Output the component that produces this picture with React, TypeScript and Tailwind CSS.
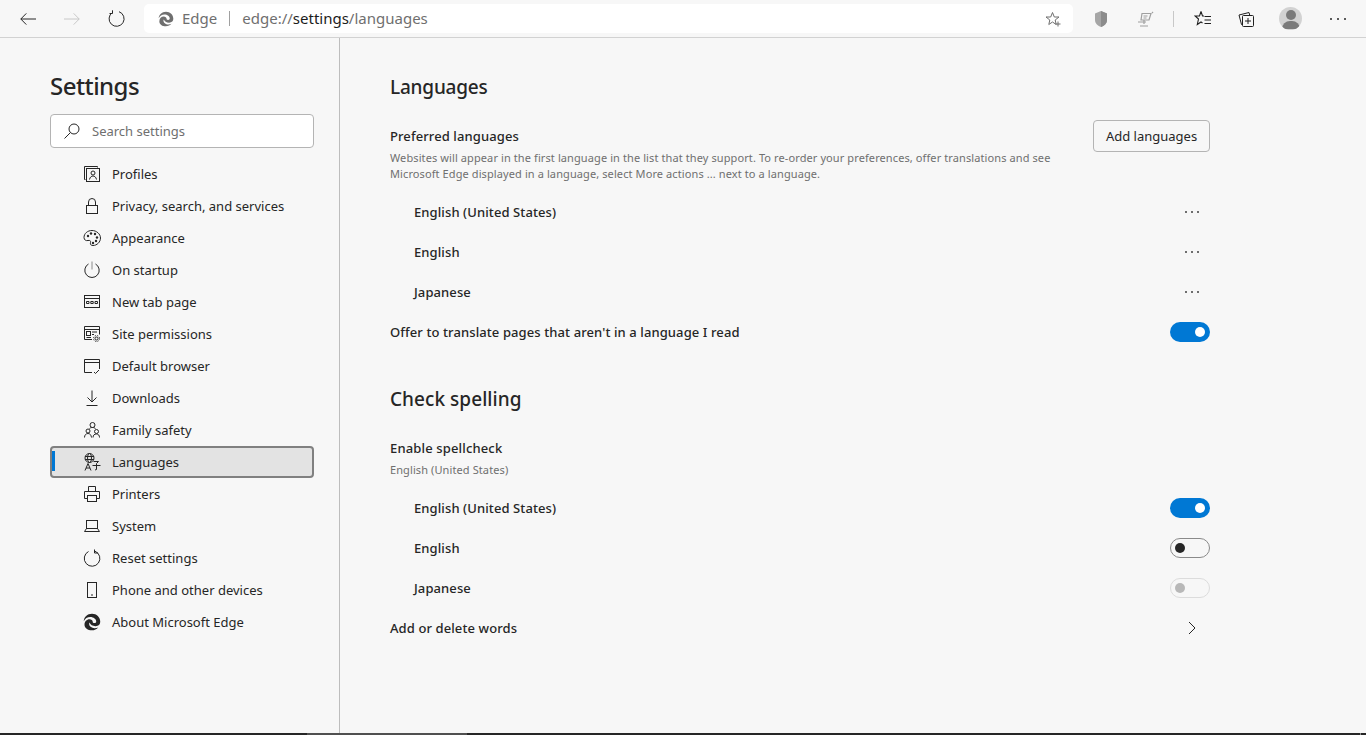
import type { ReactNode } from "react";

const ink = "#262626";

function EdgeLogo({ size, color }: { size: number; color: string }) {
  return (
    <svg width={size} height={size} viewBox="0 0 24 24" fill={color}>
      <path d="M12 1C5.6 1 1.4 5.6 1 11c1.6-3.6 5-5.6 8.6-5.6 4.600 0 8 3 8 5.800 0 1.400-1 2.200-2.400 2.200-1.600 0-2.200-.6-2.200-1.400 0-2.200-2-3.600-4.400-3.600-3.600 0-6.600 3-6.600 7.200C2 20 6.600 23 11.600 23c3.800 0 6.600-1.400 8.600-3.800-2.200 1-5.200 1.400-7.600.6-2.800-1-4.400-2.800-4.400-5 0-.8.2-1.400.6-2 .8 3 4 4.800 7.800 4.800 4.400 0 6.400-2.400 6.400-5.800C23 5.400 18.200 1 12 1z" />
    </svg>
  );
}

function Ico({ children }: { children: ReactNode }) {
  return (
    <svg width="18" height="18" viewBox="0 0 18 18" fill="none" stroke={ink} strokeWidth="1">
      {children}
    </svg>
  );
}

const navItems: { label: string; icon: ReactNode }[] = [
  {
    label: "Profiles",
    icon: (
      <Ico>
        <path d="M2.500 14.500H1.500V1.500H14.500V2.500" />
        <rect x="3.500" y="3.500" width="13" height="13" />
        <circle cx="10" cy="8" r="2" />
        <path d="M6.500 14.500c.5-2.500 2-3.500 3.500-3.500s3 1 3.500 3.500" />
      </Ico>
    ),
  },
  {
    label: "Privacy, search, and services",
    icon: (
      <Ico>
        <rect x="3.500" y="8.500" width="11" height="8" />
        <path d="M5.500 8.500V5a3.500 3.500 0 0 1 7 0v3.500" />
      </Ico>
    ),
  },
  {
    label: "Appearance",
    icon: (
      <Ico>
        <path d="M9 1.500c-4.500 0-8 3-8 7 0 2.500 2 3.500 4 3 2-.5 3 .5 2.500 2-.5 2 .5 3 2.500 3 4 0 7.500-3.500 7.500-7.500S13.500 1.500 9 1.500z" />
        <g fill={ink} stroke="none">
          <circle cx="5" cy="7" r="1.200" />
          <circle cx="8" cy="4.500" r="1.200" />
          <circle cx="12" cy="5" r="1.200" />
          <circle cx="14" cy="8.500" r="1.200" />
          <circle cx="13" cy="12" r="1.200" />
          <circle cx="10" cy="14" r="1.200" />
        </g>
      </Ico>
    ),
  },
  {
    label: "On startup",
    icon: (
      <Ico>
        <path d="M9 .5v8" stroke="#8a8a8a" />
        <path d="M5.500 3a7.200 7.200 0 1 0 7 0" />
      </Ico>
    ),
  },
  {
    label: "New tab page",
    icon: (
      <Ico>
        <rect x="1.500" y="2.500" width="15" height="12" />
        <path d="M1.500 5.500h15" />
        <path d="M3.500 8.500h2.500v2H3.500zM7.800 8.500h2.400v2H7.800zM12 8.500h2.500v2H12z" />
      </Ico>
    ),
  },
  {
    label: "Site permissions",
    icon: (
      <Ico>
        <path d="M9 14.500H1.500V1.500h15v8" />
        <path d="M1.500 4.500h15" />
        <rect x="3.500" y="6.500" width="4" height="4" />
        <path d="M9 7h5M9 9.500h2M3.500 12.500H8" />
        <circle cx="13.500" cy="13.500" r="1.500" />
        <circle cx="13.500" cy="13.500" r="3" strokeDasharray="1.200 1.200" />
      </Ico>
    ),
  },
  {
    label: "Default browser",
    icon: (
      <Ico>
        <path d="M9 15.500H1.500V2.500h15V12" />
        <path d="M1.500 5.500h15" />
        <path d="M11 15l1.500 1.500 3.500-3.500" />
      </Ico>
    ),
  },
  {
    label: "Downloads",
    icon: (
      <Ico>
        <path d="M9 1.500V13M4.500 8.500L9 13l4.500-4.500M3.500 16.500h11" />
      </Ico>
    ),
  },
  {
    label: "Family safety",
    icon: (
      <Ico>
        <circle cx="9.500" cy="4" r="2.500" />
        <circle cx="5" cy="10" r="2" />
        <circle cx="13.500" cy="10.500" r="2" />
        <path d="M1.500 16.500c0-2.500 1.500-4 3.500-4s3.200 1.500 3.500 4M10 16.500c0-2.500 1.500-3.500 3.500-3.500s3 1.500 3 3.500M6.500 7.500c.5-.6 1.500-1 3-1s2.500.4 3 1.400" />
      </Ico>
    ),
  },
  {
    label: "Languages",
    icon: (
      <svg width="18" height="18" viewBox="0 0 18 18" fill="none" stroke={ink} strokeWidth="1">
        <circle cx="6.500" cy="5" r="4.500" />
        <ellipse cx="6.500" cy="5" rx="2" ry="4.500" />
        <path d="M2 3.500h9M2 6.500h9" />
        <path d="M2 17.500L5 10.500 8 17.500M3 15h4" />
        <path d="M10.500 8.500h5l-2 2v6l-1.500.5M9.500 12.500h8" />
      </svg>
    ),
  },
  {
    label: "Printers",
    icon: (
      <Ico>
        <path d="M4.500 13.500H1.500V6.500h15v7h-3" />
        <path d="M5.500 6.500V1.500h7v5" />
        <rect x="4.500" y="10.500" width="9" height="6" />
      </Ico>
    ),
  },
  {
    label: "System",
    icon: (
      <Ico>
        <rect x="3.500" y="3.500" width="11" height="8" />
        <path d="M1.500 14.500h15M3.500 11.500l-2 3M14.500 11.500l2 3" />
      </Ico>
    ),
  },
  {
    label: "Reset settings",
    icon: (
      <Ico>
        <path d="M5.500 2.500a7.800 7.800 0 1 0 6.500-.3" />
        <path d="M11.500 .5v3.500h3.500" />
      </Ico>
    ),
  },
  {
    label: "Phone and other devices",
    icon: (
      <Ico>
        <rect x="4.500" y="1.500" width="9" height="15" />
        <path d="M8 14h2" />
      </Ico>
    ),
  },
  { label: "About Microsoft Edge", icon: <EdgeLogo size={18} color="#262626" /> },
];

function Toggle({ state }: { state: "on" | "off" | "disabled" }) {
  if (state === "on") {
    return (
      <div className="flex h-5 w-10 items-center justify-end rounded-full bg-[#0078d4] pr-[5px]">
        <div className="h-[10px] w-[10px] rounded-full bg-white" />
      </div>
    );
  }
  if (state === "off") {
    return (
      <div className="flex h-5 w-10 items-center rounded-full border border-[#8a8a8a] pl-[4px]">
        <div className="h-[10px] w-[10px] rounded-full bg-[#262626]" />
      </div>
    );
  }
  return (
    <div className="flex h-5 w-10 items-center rounded-full border border-[#dcdcdc] pl-[4px]">
      <div className="h-[10px] w-[10px] rounded-full bg-[#b8b8b8]" />
    </div>
  );
}

function Dots() {
  return (
    <div className="flex w-[36px] justify-center gap-[4px]">
      <span className="h-[2px] w-[2px] rounded-full bg-[#404040]" />
      <span className="h-[2px] w-[2px] rounded-full bg-[#404040]" />
      <span className="h-[2px] w-[2px] rounded-full bg-[#404040]" />
    </div>
  );
}

function Row({ label, indent, right }: { label: string; indent?: boolean; right: ReactNode }) {
  return (
    <div className={`flex h-10 items-center justify-between ${indent ? "pl-6" : ""}`}>
      <span className="pt-[2px] text-[13px] font-medium tracking-[0.1px] text-[#262626]">{label}</span>
      {right}
    </div>
  );
}

export default function App() {
  return (
    <div className="flex h-[735px] w-[1366px] flex-col overflow-hidden bg-[#f7f7f7] font-['Noto_Sans',sans-serif]">
      {/* Toolbar */}
      <header className="flex h-[38px] shrink-0 items-center border-b border-[#d2d2d2] bg-[#f7f7f7]">
        <div className="flex w-[144px] shrink-0 items-center">
          <div className="flex w-[50px] justify-center pl-[6px]">
            <svg width="16" height="12" viewBox="0 0 16 12" fill="none" stroke="#262626" strokeWidth="1">
              <path d="M16 6H.8M6.300 .4L.8 6l5.500 5.600" />
            </svg>
          </div>
          <div className="flex w-[44px] justify-center">
            <svg width="16" height="12" viewBox="0 0 16 12" fill="none" stroke="#c8c8c8" strokeWidth="1">
              <path d="M0 6h15.200M9.700 .4L15.200 6l-5.500 5.600" />
            </svg>
          </div>
          <div className="flex w-[44px] justify-center">
            <svg width="17" height="17" viewBox="0 0 17 17" fill="none" stroke="#262626" strokeWidth="1">
              <path d="M4.500 2.500a7.500 7.500 0 1 0 6.500-.8" />
              <path d="M4.500 .3v3.200h-3" />
            </svg>
          </div>
        </div>
        <div className="flex h-[29px] w-[929px] shrink-0 items-center rounded-[5px] bg-white pl-[14px] pr-[11px]">
          <EdgeLogo size={16} color="#6f6f6f" />
          <span className="ml-[8px] text-[15px] text-[#6f6f6f]">Edge</span>
          <span className="mx-[12px] h-[15px] w-px bg-[#a0a0a0]" />
          <span className="text-[15px] text-[#6f6f6f]">
            edge://<span className="text-[#1c1c1c]">settings</span>/languages
          </span>
          <svg className="ml-auto" width="17" height="16" viewBox="0 0 17 16" fill="none" stroke="#6f6f6f" strokeWidth="1">
            <path d="M7.500 1.500L9.300 6h4.700L10.200 9l1 4.500-3.700-2.500L3.800 13.500l1-4.500L1 6h4.700z" />
            <path d="M13 10.500v5M10.500 13h5" />
          </svg>
        </div>
        <div className="flex flex-1 items-center">
          <div className="ml-[19px] flex w-[18px] justify-center">
            <svg width="14" height="18" viewBox="0 0 14 18">
              <path d="M7 1l6 2.500V10c0 3.500-3 6-6 7-3-1-6-3.500-6-7V3.500z" fill="#a6a6a6" />
              <path d="M7 1l6 2.500V10c0 3.500-3 6-6 7z" fill="#8c8c8c" />
            </svg>
          </div>
          <div className="ml-[26px] flex w-[18px] justify-center">
            <svg width="18" height="18" viewBox="0 0 18 18" fill="none" stroke="#a0a0a0" strokeWidth="1.200">
              <path d="M6 3.500h9L13 10H5z" />
              <path d="M7.500 6h4M7.500 8h3M2 12h8M8 10v4M4 16h8" />
              <path d="M16 2l1 1" />
            </svg>
          </div>
          <span className="ml-[19px] h-[16px] w-px bg-[#c8c8c8]" />
          <div className="ml-[20px]">
            <svg width="18" height="18" viewBox="0 0 18 18" fill="none" stroke="#1f1f1f" strokeWidth="1.100">
              <path d="M7 1.500L8.500 6H10M7 1.500L5.500 6H1l3.500 3-1.200 5.500L7 12l1.500 1" />
              <path d="M10.500 6.500h6.500M10.500 10h6.500M10.500 13.500h6.500" />
            </svg>
          </div>
          <div className="ml-[26px]">
            <svg width="16" height="16" viewBox="0 0 16 16" fill="none" stroke="#1f1f1f" strokeWidth="1">
              <rect x="4.500" y="4.500" width="11" height="11" rx="1" />
              <path d="M10 7v6M7 10h6" />
              <path d="M4.500 13.500h-1l-2.500-9.500 10-2.500.8 3" />
            </svg>
          </div>
          <div className="ml-[25px] flex h-[23px] w-[23px] items-end justify-center overflow-hidden rounded-full bg-[#d2d2d2]">
            <div className="relative h-[20px] w-[18px]">
              <div className="absolute left-[4px] top-0 h-[10px] w-[10px] rounded-full bg-[#7a7a7a]" />
              <div className="absolute bottom-[1px] left-0 h-[8px] w-[18px] rounded-t-full bg-[#7a7a7a]" />
            </div>
          </div>
          <div className="ml-[28px] flex gap-[5px]">
            <span className="h-[2px] w-[2px] rounded-full bg-[#262626]" />
            <span className="h-[2px] w-[2px] rounded-full bg-[#262626]" />
            <span className="h-[2px] w-[2px] rounded-full bg-[#262626]" />
          </div>
        </div>
      </header>

      <div className="flex min-h-0 flex-1">
        {/* Sidebar */}
        <aside className="w-[340px] shrink-0 border-r border-[#bdbdbd] pl-[50px] pr-[25px] pt-[32px]">
          <h1 className="text-[24px] font-medium leading-[32px] tracking-[-0.55px] text-[#262626]">Settings</h1>
          <div className="mt-[12px] flex h-[34px] items-center rounded-sm border border-[#b4b4b4] bg-white pl-[12px]">
            <svg width="18" height="18" viewBox="0 0 18 18" fill="none" stroke="#262626" strokeWidth="1">
              <circle cx="11" cy="7" r="5" />
              <path d="M7.500 10.500L1.500 16.500" />
            </svg>
            <span className="ml-[11px] pt-[2px] text-[13px] text-[#6f6f6f]">Search settings</span>
          </div>
          <nav className="mt-[10px]">
            {navItems.map((item) => {
              const active = item.label === "Languages";
              return (
                <div
                  key={item.label}
                  className={
                    active
                      ? "relative flex h-8 items-center rounded-sm border-2 border-[#808080] bg-[#e3e3e3] pl-[31px]"
                      : "flex h-8 items-center pl-[33px]"
                  }
                >
                  {active && <span className="absolute left-[0px] top-[3px] h-[20px] w-[3px] bg-[#0078d4]" />}
                  <span className="flex w-[18px] shrink-0 justify-center">{item.icon}</span>
                  <span className="ml-[11px] pt-[2px] text-[13px] text-[#262626]">{item.label}</span>
                </div>
              );
            })}
          </nav>
        </aside>

        {/* Main */}
        <main className="w-[870px] pl-[50px] pt-[33px]">
          <h2 className="text-[19px] font-medium leading-[32px] tracking-[-0.2px] text-[#262626]">Languages</h2>
          <div className="mt-[17px] flex items-start justify-between">
            <div className="pt-[6px]">
              <h3 className="text-[13px] font-medium leading-[20px] tracking-[0.1px] text-[#262626]">Preferred languages</h3>
              <p className="mt-[4px] w-[680px] text-[11px] leading-[16px] tracking-[0.1px] text-[#6f6f6f]">
                Websites will appear in the first language in the list that they support. To re-order your preferences, offer translations and see Microsoft Edge displayed in a language, select More actions ... next to a language.
              </p>
            </div>
            <button className="h-8 w-[117px] shrink-0 rounded-sm border border-[#b4b4b4] pt-[2px] text-[13px] text-[#262626]">
              Add languages
            </button>
          </div>
          <div className="mt-[10px]">
            <Row label="English (United States)" indent right={<Dots />} />
            <Row label="English" indent right={<Dots />} />
            <Row label="Japanese" indent right={<Dots />} />
            <Row label="Offer to translate pages that aren't in a language I read" right={<Toggle state="on" />} />
          </div>
          <h2 className="mt-[31px] text-[19px] font-medium leading-[32px] tracking-[0.05px] text-[#262626]">Check spelling</h2>
          <h3 className="mt-[23px] text-[13px] font-medium leading-[20px] tracking-[0.15px] text-[#262626]">Enable spellcheck</h3>
          <p className="mt-[4px] text-[11px] leading-[16px] tracking-[0.1px] text-[#6f6f6f]">English (United States)</p>
          <div className="mt-[10px]">
            <Row label="English (United States)" indent right={<Toggle state="on" />} />
            <Row label="English" indent right={<Toggle state="off" />} />
            <Row label="Japanese" indent right={<Toggle state="disabled" />} />
            <Row
              label="Add or delete words"
              right={
                <div className="flex w-[36px] justify-center">
                  <svg width="10" height="14" viewBox="0 0 10 14" fill="none" stroke="#262626" strokeWidth="1">
                    <path d="M2 1l6 6-6 6" />
                  </svg>
                </div>
              }
            />
          </div>
        </main>
      </div>

      {/* Edge of the taskbar below the window */}
      <div className="flex h-[2px] shrink-0 bg-[#262626]">
        <div className="ml-[307px] w-[160px] bg-[#505050]" />
        <div className="ml-[893px] w-px bg-[#8a8a8a]" />
      </div>
    </div>
  );
}
